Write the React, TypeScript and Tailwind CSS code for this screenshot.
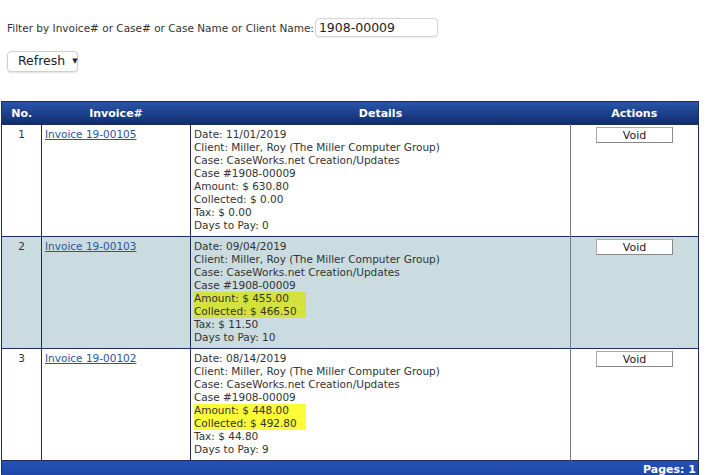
import { useState } from 'react';

interface Invoice {
  no: number;
  number: string;
  date: string;
  amount: string;
  collected: string;
  tax: string;
  daysToPay: number;
  highlight?: string;
  rowBg?: string;
}

const invoices: Invoice[] = [
  {
    no: 1,
    number: '19-00105',
    date: '11/01/2019',
    amount: '630.80',
    collected: '0.00',
    tax: '0.00',
    daysToPay: 0,
  },
  {
    no: 2,
    number: '19-00103',
    date: '09/04/2019',
    amount: '455.00',
    collected: '466.50',
    tax: '11.50',
    daysToPay: 10,
    highlight: 'bg-[#d3e23e]',
    rowBg: 'bg-[#cadcdf]',
  },
  {
    no: 3,
    number: '19-00102',
    date: '08/14/2019',
    amount: '448.00',
    collected: '492.80',
    tax: '44.80',
    daysToPay: 9,
    highlight: 'bg-[#fbfb3a]',
  },
];

export default function App() {
  const [filter, setFilter] = useState('1908-00009');

  return (
    <div className="min-h-[475px] bg-white text-[#333] font-['DejaVu_Sans',Verdana,sans-serif] text-[10.5px]">
      {/* Filter */}
      <div className="flex items-center pl-[7px] pt-[18px]">
        <span className="leading-[13px] mt-[2px]">
          Filter by Invoice# or Case# or Case Name or Client Name:
        </span>
        <input
          value={filter}
          onChange={(e) => setFilter(e.target.value)}
          className="ml-[1px] w-[123px] h-[19px] px-[3px] border border-[#d4d4d4] rounded-[4px] text-[12.5px] text-[#222] shadow-[0_1px_2px_rgba(0,0,0,0.08)] outline-none"
        />
      </div>

      <div className="pl-[7px] mt-[14px]">
        <button className="flex items-center h-[21px] w-[71px] pl-[10px] border border-[#d0d0d0] rounded-[4px] bg-white text-[12.5px] text-[#222] shadow-[0_1px_2px_rgba(0,0,0,0.12)]">
          Refresh
          <span className="ml-[7px] text-[7px] leading-none">▼</span>
        </button>
      </div>

      {/* Invoice table */}
      <table className="mt-[29px] ml-[1px] w-[698px] border-collapse border border-[#1c2f58] leading-[13px]">
        <thead>
          <tr className="h-[23px] bg-gradient-to-b from-[#2a55aa] to-[#0f2c6b] text-white font-bold text-[11px]">
            <th className="w-[40px] text-center">No.</th>
            <th className="w-[149px] text-center">Invoice#</th>
            <th className="w-[380px] text-center">Details</th>
            <th className="text-center">Actions</th>
          </tr>
        </thead>
        <tbody>
          {invoices.map((inv) => (
            <tr key={inv.no} className={`align-top border-t border-[#1c2f58] ${inv.rowBg ?? 'bg-white'}`}>
              <td className="pt-[3px] text-center border-r border-[#1c2f58]">{inv.no}</td>
              <td className="pt-[3px] pl-[3px] border-r border-[#1c2f58]">
                <a href="#" className="text-[#2a55a0] underline">
                  Invoice {inv.number}
                </a>
              </td>
              <td className="pt-[3px] pl-[3px] pb-[4px] border-r border-[#6b7b96]">
                <div>Date: {inv.date}</div>
                <div>Client: Miller, Roy (The Miller Computer Group)</div>
                <div>Case: CaseWorks.net Creation/Updates</div>
                <div>Case #1908-00009</div>
                <div className={inv.highlight ? `w-[112px] ${inv.highlight}` : ''}>
                  <div>Amount: $ {inv.amount}</div>
                  <div>Collected: $ {inv.collected}</div>
                </div>
                <div>Tax: $ {inv.tax}</div>
                <div>Days to Pay: {inv.daysToPay}</div>
              </td>
              <td className="pt-[2px] text-center">
                <button className="w-[77px] h-[16px] bg-white border border-[#aaa] border-r-[#888] border-b-[#888] text-[11px] leading-[13px] text-[#222]">
                  Void
                </button>
              </td>
            </tr>
          ))}
        </tbody>
        <tfoot>
          <tr className="h-[16px] bg-gradient-to-b from-[#2650b4] to-[#1d46a8] text-white font-bold text-[11px]">
            <td colSpan={4} className="text-right pr-[2px] pt-[1px] border-t border-[#1c2f58]">
              Pages: 1
            </td>
          </tr>
        </tfoot>
      </table>
    </div>
  );
}
